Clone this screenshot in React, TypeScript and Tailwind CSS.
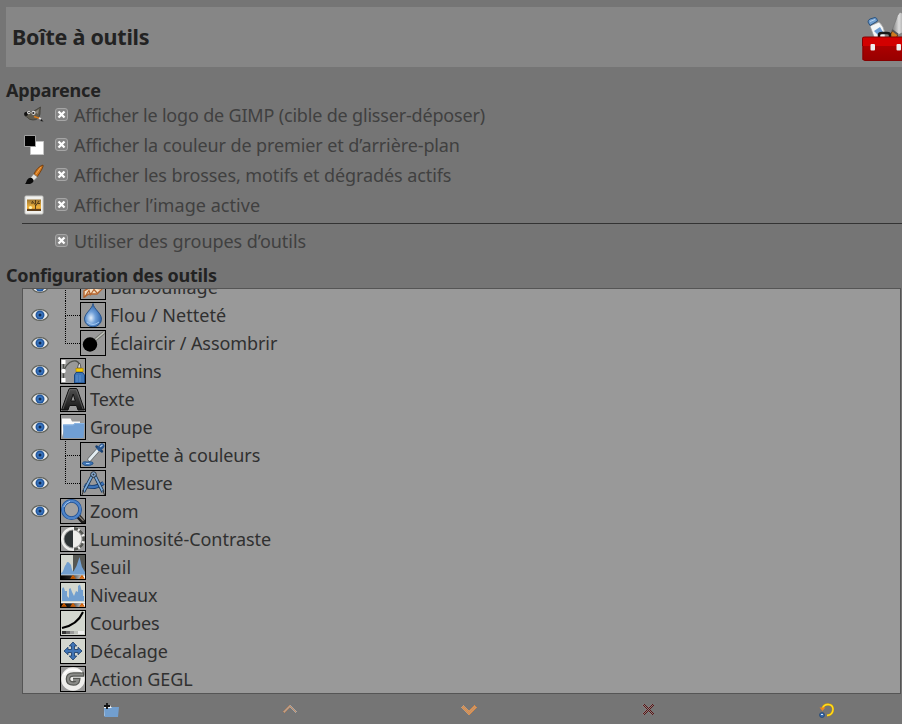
import React from "react";

type IconProps = { children: React.ReactNode };

function ToolBox({ children }: IconProps) {
  return (
    <svg className="h-[26px] w-[26px] shrink-0" viewBox="0 0 26 26">
      {children}
      <rect x=".5" y=".5" width="25" height="25" fill="none" stroke="#000" />
    </svg>
  );
}

const Eye = () => (
  <svg className="h-3 w-[18px] shrink-0" viewBox="0 0 18 12">
    <path d="M.6 6C3.500-1.200 14.500-1.200 17.400 6 14.500 13.200 3.500 13.200.6 6Z" fill="#eeeeec" stroke="#62645e" strokeWidth="1.300" />
    <circle cx="9" cy="6" r="4.500" fill="#2258a0" />
    <circle cx="9" cy="6" r="2.900" fill="#3d78c0" />
    <circle cx="9" cy="6" r="1.500" fill="#122b50" />
  </svg>
);

const Smudge = () => (
  <ToolBox>
    <path d="M4 23 4 17 9 14 15 8 22 8 22 15 17 20 9 20Z" fill="#f6dfc3" stroke="#b5642d" strokeWidth="1.400" />
    <path d="M4.500 23.500 9 16.500 10.500 21M10 21.500 14 15.500 17 19M15 14 20 15" fill="none" stroke="#b5642d" strokeWidth="1.200" />
  </ToolBox>
);

const Drop = () => (
  <ToolBox>
    <defs>
      <radialGradient id="drop" cx=".38" cy=".62" r=".6">
        <stop offset="0" stopColor="#e4effb" />
        <stop offset=".45" stopColor="#6f9fd8" />
        <stop offset="1" stopColor="#2f65ab" />
      </radialGradient>
    </defs>
    <path d="M13 1.500C13.600 7 21.500 11 21.500 17.200A8.500 7.600 0 0 1 4.500 17.200C4.500 11 12.400 7 13 1.500Z" fill="url(#drop)" stroke="#214d85" strokeWidth=".9" />
    <path d="M7 20Q13 25 19 20" fill="none" stroke="#a4c9f2" strokeWidth="1" />
  </ToolBox>
);

const Dodge = () => (
  <ToolBox>
    <path d="M15 10 24 2.500" stroke="#70726d" strokeWidth="3.200" />
    <path d="M15 10 24 2.500" stroke="#c2c4bd" strokeWidth="1.600" />
    <circle cx="10" cy="14.500" r="7.200" fill="#000" />
  </ToolBox>
);

const Paths = () => (
  <ToolBox>
    <path d="M3.500 3V23M4 12C7 5 12 2 16 3Q20 4 19.500 10" fill="none" stroke="#4f514d" strokeWidth="1.300" />
    <path d="M17.500 10 18.700 5.500H20L21 10Z" fill="#ddd" stroke="#333" strokeWidth=".7" />
    <rect x="16" y="10.300" width="7" height="3.500" fill="#f4cd00" stroke="#b58b00" strokeWidth=".7" />
    <path d="M16 14.500H22.500L24.500 17V25H14.500V17Z" fill="#3f76b8" stroke="#1c4780" />
    <path d="M17 17V24M20 17V24" stroke="#5e91cc" />
    <rect x="1.500" y="2" width="4" height="4" fill="#fff" />
    <circle cx="3.500" cy="13" r="2.200" fill="#fff" />
    <rect x="1.500" y="20" width="4" height="4" fill="#fff" />
  </ToolBox>
);

const TextTool = () => (
  <ToolBox>
    <defs>
      <linearGradient id="ink" x2="0" y2="1">
        <stop stopColor="#505050" />
        <stop offset="1" stopColor="#171717" />
      </linearGradient>
    </defs>
    <path d="M1.500 24 8.800 3.500Q9.200 2.500 10 2.500H16Q17 2.500 17.300 3.500L24.500 24H18L16.500 19.500H9.500L8 24ZM10.800 15H15.300L13.200 8Z" fill="url(#ink)" fillRule="evenodd" stroke="#111" strokeWidth="1" />
    <path d="M3 23 9.800 3.700H16.300L23 23" fill="none" stroke="#777" strokeWidth=".6" />
  </ToolBox>
);

const Folder = () => (
  <ToolBox>
    <path d="M2 23V4.500H10.500L12 7.500H20V12H5Z" fill="#fafafa" />
    <path d="M3 10.500H13L15 9H24.500L23.500 24H3.500Z" fill="#709fd4" />
    <path d="M3.500 11H13.200L15.200 9.500H24" fill="none" stroke="#8bb5e3" />
  </ToolBox>
);

const Picker = () => (
  <ToolBox>
    <path d="M9.500 17.500 17.500 8.500" stroke="#666a6c" strokeWidth="4.200" strokeLinecap="round" />
    <path d="M9.500 17.500 17.500 8.500" stroke="#e4edf2" strokeWidth="2.700" strokeLinecap="round" />
    <path d="M16.500 4.500 22 9.500" stroke="#173f70" strokeWidth="2.400" strokeLinecap="round" />
    <path d="M19.500 6.500 22 4" stroke="#27558f" strokeWidth="5" strokeLinecap="round" />
    <path d="M20.500 4.500 22 3.300" stroke="#a3c3e8" strokeWidth="1.500" strokeLinecap="round" />
    <path d="M2.500 22Q2 19 7 20Q14 19 13 22Q10 24.500 5 23.500Z" fill="#3f75b6" stroke="#1d4c83" strokeWidth=".8" />
    <path d="M6 21.500H9.500" stroke="#abd0fa" />
  </ToolBox>
);

const Measure = () => (
  <ToolBox>
    <path d="M4.500 15Q13 20 23.500 13" fill="none" stroke="#173d70" strokeWidth="4" />
    <path d="M4.500 15Q13 20 23.500 13" fill="none" stroke="#3d74b8" strokeWidth="2.400" />
    <path d="M12.500 5 3.500 22M14.500 5 23 22" stroke="#173552" strokeWidth="3.400" />
    <path d="M12.500 5 3.700 21.500M14.500 5 22.800 21.500" stroke="#7ca9d9" strokeWidth="1.700" />
    <path d="M3.700 20 2 25M22.800 20 24.500 25" stroke="#333" />
    <circle cx="13.500" cy="4.500" r="2.800" fill="#89afd9" stroke="#29323a" />
    <circle cx="13.500" cy="4.500" r="1" fill="#29323a" />
  </ToolBox>
);

const Zoom = () => (
  <ToolBox>
    <path d="m18.500 18.500 4.500 5" stroke="#1c1b1a" strokeWidth="4.800" strokeLinecap="round" />
    <path d="m18.500 17.800 5 5" stroke="#827b72" strokeWidth="1.400" />
    <circle cx="11.500" cy="11.500" r="8.600" fill="#a2a2a2" stroke="#1f4f91" strokeWidth="3.800" />
    <circle cx="11.500" cy="11.500" r="8.700" fill="none" stroke="#4d83c8" strokeWidth="2.200" />
    <path d="M3.800 9Q5.500 4.500 10 3.200" fill="none" stroke="#a5c6ec" />
  </ToolBox>
);

const Brightness = () => (
  <ToolBox>
    <circle cx="13" cy="13" r="10.700" fill="none" stroke="#eeeeec" strokeWidth="2.500" />
    <path d="M13 2.300A10.700 10.700 0 0 1 13 23.700" fill="none" stroke="#555753" strokeWidth="2.800" strokeDasharray="5 2" />
    <path d="M13 4.500A8.500 8.500 0 0 0 13 21.500Z" fill="#2e3436" />
    <path d="M13 4.500A8.500 8.500 0 0 1 13 21.500Z" fill="#eeeeec" />
    <path d="M13.500 1V4.500M13.500 21.500V25" stroke="#eee" />
  </ToolBox>
);

const Marker = ({ x, fill }: { x: number; fill: string }) => (
  <path d={`M${x - 1.7} 24.200 ${x} 21.800 ${x + 1.7} 24.200Z`} fill={fill} stroke="#ce5c00" strokeWidth="1.200" />
);

const Levelbar = () => (
  <>
    <defs>
      <linearGradient id="levelbar">
        <stop stopColor="#000" />
        <stop offset=".4" stopColor="#222" />
        <stop offset="1" stopColor="#fff" />
      </linearGradient>
    </defs>
    <rect x="1" y="21.500" width="24" height="3.500" fill="url(#levelbar)" />
  </>
);

const Threshold = () => (
  <ToolBox>
    <path fill="#d3d7cf" d="M1 1H13V21H1Z" />
    <path fill="#555753" d="M13 1H25V21H13Z" />
    <path d="M1 19C4 18 4 12 6 10.500Q7 7 9 8.500L11 11Q12 17 13.500 17.500L16.500 12 19.500 3 22 13 25 18V20H1Z" fill="#729fcf" />
    <path d="M1 20.500H25" stroke="#9fb9d3" />
    <Levelbar />
    <Marker x={13} fill="#1c0900" />
    <Marker x={22} fill="#fff" />
  </ToolBox>
);

const Levels = () => (
  <ToolBox>
    <path fill="#d3d7cf" d="M1 1H25V21H1Z" />
    <path d="M2 19V7Q3 4 4 6L5 9H7V14L9 16V7L10.500 6 12 10 14 14 16 9 18 10V4L20 2.500 21.500 8H23V14H24V19Z" fill="#729fcf" />
    <path d="M1 20.500H25" stroke="#eee" />
    <Levelbar />
    <Marker x={4} fill="#000" />
    <Marker x={13} fill="#777" />
    <Marker x={22} fill="#fff" />
  </ToolBox>
);

const Curves = () => (
  <ToolBox>
    <path fill="#d3d7cf" d="M1 1H25V25H1Z" />
    <path d="M2 18C12 16 19 11 23 2" fill="none" stroke="#000" strokeWidth="2" />
    <path d="M2 22.500H6" stroke="#333" strokeWidth="3" />
    <path d="M6 22.500H10" stroke="#666" strokeWidth="3" />
    <path d="M10 22.500H14" stroke="#999" strokeWidth="3" />
    <path d="M14 22.500H18" stroke="#bfc2bc" strokeWidth="3" />
    <path d="M18 22.500H24" stroke="#eee" strokeWidth="3" />
  </ToolBox>
);

const Offset = () => (
  <ToolBox>
    <path fill="#d3d7cf" d="M1 1H25V25H1Z" />
    <path d="m13 4 3.700 4h-2.200v3.500H18V9.300l4 3.700-4 3.700v-2.200h-3.500V18h2.200L13 22l-3.700-4h2.200v-3.500H8v2.200L4 13l4-3.700v2.200h3.500V8H9.300Z" fill="#3f75b6" stroke="#22446e" strokeWidth=".9" />
  </ToolBox>
);

const Gegl = () => (
  <ToolBox>
    <circle cx="13" cy="13" r="11.800" fill="#eeeeec" />
    <path d="M24 8.500H13.500Q8 8.500 8 13T13.500 17.500Q17.500 17.500 18 14H13" fill="none" stroke="#555753" strokeWidth="4.600" />
    <path d="M23 8.500H13.500Q8 8.500 8 13T13.500 17.500Q17.500 17.500 18 14H13" fill="none" stroke="#8a8b88" strokeWidth="2.200" />
    <path d="M4 9Q7 3 13 3.500T22 6" fill="none" stroke="#fff" strokeWidth="1.500" />
  </ToolBox>
);

const Wilber = () => (
  <svg className="h-5 w-5" viewBox="0 0 20 20">
    <path d="M4 6Q7 8 10 6L16.500 2Q16 5 16 9 15 15 9 15Q5 15 3 12L1 11 1 8Z" fill="#5f5b4f" stroke="#393832" strokeWidth=".7" />
    <path d="M11 7 15 4 14 9Z" fill="#8a867c" />
    <circle cx="2" cy="9" r="1.900" fill="#111" />
    <circle cx="4.800" cy="7.500" r="1.700" fill="#ddd" />
    <circle cx="9.500" cy="7.800" r="2.100" fill="#ddd" />
    <circle cx="5" cy="7.500" r=".8" fill="#222" />
    <circle cx="9.300" cy="8" r="1.100" fill="#222" />
    <path d="m10 11.500 6 2" stroke="#d97a18" strokeWidth="1.500" />
    <path d="m15 13 2 1" stroke="#ddd" strokeWidth="1.600" />
    <path d="m17 14 2.500 2.500-3-.5Z" fill="#161616" />
  </svg>
);

const Swatches = () => (
  <svg className="h-5 w-5" viewBox="0 0 20 20">
    <path d="M6.500 6.500h13v13h-13Z" fill="#fff" stroke="#c4c4c4" />
    <path d="M.5.500h11v11H.5Z" fill="#000" stroke="#a0a0a0" />
  </svg>
);

const Brush = () => (
  <svg className="h-[22px] w-5" viewBox="0 0 20 22">
    <path d="M9.500 11Q13 3 19 1 20 3 13 13Z" fill="#cf761d" stroke="#713b0c" strokeWidth=".9" />
    <path d="m12 10 5-7" stroke="#f2a44f" />
    <path d="m6.500 14 3-4 4 3-4 4Z" fill="#e2e2df" stroke="#777" strokeWidth=".6" />
    <path d="M1 20Q2 19 3 16 6 12 9 15 11 18 6 20Z" fill="#0b0b0b" />
  </svg>
);

const Picture = () => (
  <svg className="h-5 w-5" viewBox="0 0 20 20">
    <defs>
      <linearGradient id="dusk" x2="0" y2="1">
        <stop stopColor="#9a7433" />
        <stop offset=".7" stopColor="#f2b43a" />
        <stop offset="1" stopColor="#b77422" />
      </linearGradient>
    </defs>
    <rect x="1" y="1" width="18" height="18" rx="1" fill="#f1f1ee" stroke="#c8c8c5" />
    <path d="M3 4.500h14v11H3Z" fill="url(#dusk)" />
    <path d="M3 14h14v2H3Z" fill="#5e3f1b" />
    <circle cx="6.500" cy="12.500" r="1.600" fill="#fff4b4" />
    <path d="M11.500 14V10L8 6M11.500 11 15 6M11.500 9V5M9 8H7M13.500 8.500H16" fill="none" stroke="#4a3415" strokeWidth=".9" />
  </svg>
);

const Toolbox = () => (
  <svg className="-mt-px h-[49px] w-[41px] shrink-0" viewBox="0 0 41 49">
    <defs>
      <linearGradient id="bristles" x1="0" x2="1">
        <stop stopColor="#777" />
        <stop offset=".5" stopColor="#ddd" />
        <stop offset="1" stopColor="#888" />
      </linearGradient>
      <linearGradient id="case" x2="0" y2="1">
        <stop stopColor="#b80000" />
        <stop offset="1" stopColor="#980000" />
      </linearGradient>
    </defs>
    <path d="m9 14 9-4q5 4 6 12v8H15Z" fill="#f4f6f7" stroke="#999" strokeWidth=".7" />
    <path d="m13 19 6-4 3 5-5 3Z" fill="#6b9bd0" />
    <path d="m7 10q0-2 2-3l5-1.500q2 0 2.500 3.500l-7.500 4.500Z" fill="#729fcf" stroke="#28527f" />
    <path d="m9 9.500 5-2" stroke="#b6d2ee" />
    <path d="m32 18 5 4q-1 5-5 8h-4q0-7 4-12Z" fill="#ce7b20" stroke="#653709" />
    <path d="m31 18 4-10q1-5 4-8l6 3v16l-8 4Z" fill="url(#bristles)" stroke="#777" strokeWidth=".7" />
    <path d="m31 18 6 4.500" stroke="#555" strokeWidth="1.800" />
    <path d="M18 27v-4q0-2 3-2h5q3 0 3 2v4" fill="none" stroke="#171717" strokeWidth="2.500" />
    <path d="M1.500 48V26q0-1 2-1H43v23Z" fill="url(#case)" />
    <path d="M1 34v-7q0-2 2-2H43v9Z" fill="#d20000" />
    <path d="M1.500 34V26.500q0-1.500 2-1.500H42M2 34v13q0 1.500 2 1.500H42" fill="none" stroke="#850000" />
    <rect x="9.500" y="32" width="4.500" height="6.500" rx="1" fill="#eee" />
    <rect x="35.500" y="32" width="4.500" height="6.500" rx="1" fill="#eee" />
  </svg>
);

const Check = () => (
  <svg className="-mt-0.5 ml-[11px] h-[13px] w-[13px] shrink-0" viewBox="0 0 13 13">
    <rect x=".5" y=".5" width="12" height="12" rx="2.500" fill="#858585" stroke="#a5a5a5" />
    <path d="m3.500 3.500 6 6m0-6-6 6" stroke="#fff" strokeWidth="2.300" />
  </svg>
);

const options = [
  { label: "Afficher le logo de GIMP (cible de glisser-déposer)", icon: <Wilber />, track: "tracking-[-0.18px]" },
  { label: "Afficher la couleur de premier et d’arrière-plan", icon: <Swatches />, track: "tracking-[-0.11px]" },
  { label: "Afficher les brosses, motifs et dégradés actifs", icon: <Brush />, track: "tracking-[-0.09px]" },
  { label: "Afficher l’image active", icon: <Picture />, track: "tracking-[0.05px]" },
];

type Tool = { label: string; icon: React.ReactNode; eye?: boolean; child?: boolean; last?: boolean; track: string };

const tools: Tool[] = [
  { label: "Barbouillage", icon: <Smudge />, eye: true, child: true, track: "tracking-[0.02px]" },
  { label: "Flou / Netteté", icon: <Drop />, eye: true, child: true, track: "tracking-[0.03px]" },
  { label: "Éclaircir / Assombrir", icon: <Dodge />, eye: true, child: true, last: true, track: "tracking-[-0.08px]" },
  { label: "Chemins", icon: <Paths />, eye: true, track: "tracking-[-0.38px]" },
  { label: "Texte", icon: <TextTool />, eye: true, track: "tracking-[0px]" },
  { label: "Groupe", icon: <Folder />, eye: true, track: "tracking-[-0.16px]" },
  { label: "Pipette à couleurs", icon: <Picker />, eye: true, child: true, track: "tracking-[-0.1px]" },
  { label: "Mesure", icon: <Measure />, eye: true, child: true, last: true, track: "tracking-[-0.16px]" },
  { label: "Zoom", icon: <Zoom />, eye: true, track: "tracking-[-0.1px]" },
  { label: "Luminosité-Contraste", icon: <Brightness />, track: "tracking-[-0.05px]" },
  { label: "Seuil", icon: <Threshold />, track: "tracking-[0.2px]" },
  { label: "Niveaux", icon: <Levels />, track: "tracking-[-0.15px]" },
  { label: "Courbes", icon: <Curves />, track: "tracking-[-0.18px]" },
  { label: "Décalage", icon: <Offset />, track: "tracking-[0px]" },
  { label: "Action GEGL", icon: <Gegl />, track: "tracking-[-0.1px]" },
];

function ToolRow({ tool }: { tool: Tool }) {
  return (
    <div className="flex h-7 shrink-0 items-center pl-2">
      <div className="flex w-[29px] shrink-0">{tool.eye && <Eye />}</div>
      {tool.child && (
        <div className="ml-[5px] flex w-[15px] shrink-0 flex-col self-stretch">
          <div className="h-[15px] border-b border-l border-dotted border-black" />
          {!tool.last && <div className="flex-1 border-l border-dotted border-black" />}
        </div>
      )}
      {tool.icon}
      <span className={`ml-1 whitespace-nowrap text-[18px] leading-7 text-[#303030] ${tool.track}`}>{tool.label}</span>
    </div>
  );
}

const actions = [
  <svg className="h-4 w-[18px]" viewBox="0 0 18 16">
    <path d="M2 14V3h6l1 2h6v5Z" fill="#f4f4f4" />
    <path d="M2 6h7l1-1h7l-1 10H2.500Z" fill="#729fcf" />
    <path d="M5 1v6M2 4h6" stroke="#111" strokeWidth="1.800" />
  </svg>,
  <svg className="h-4 w-4" viewBox="0 0 16 16">
    <path d="m1.500 10.500 6.500-6.500 6.500 6.500" fill="none" stroke="url(#tan)" strokeWidth="2.600" shapeRendering="crispEdges" />
  </svg>,
  <svg className="h-4 w-4" viewBox="0 0 16 16">
    <path d="m1.500 4.500 6.500 6.500 6.500-6.500" fill="none" stroke="url(#amber)" strokeWidth="3" shapeRendering="crispEdges" />
  </svg>,
  <svg className="h-4 w-4" viewBox="0 0 16 16">
    <path d="m3 2.500 10 10m0-10L3 12.500" fill="none" stroke="url(#maroon)" strokeWidth="3" shapeRendering="crispEdges" />
  </svg>,
  <svg className="h-4 w-4" viewBox="0 0 16 16">
    <path d="M3.500 6.500C5 1 13.500 1 14 7q0 6-6 6.500" fill="none" stroke="#d29b00" strokeWidth="2.200" />
    <path d="M3.500 6.500C5 1 13.500 1 14 7q0 6-6 6.500" fill="none" stroke="#ffdd20" strokeWidth="1.400" />
    <path d="M.5 5.500H6.500L3.500 9Z" fill="#ef851b" />
    <circle cx="3" cy="13" r="2.500" fill="#3869aa" stroke="#183a6a" strokeWidth=".6" />
    <path d="M2 12.500h2" stroke="#dce9f8" />
  </svg>,
];

export default function App() {
  return (
    <div className="flex h-[724px] w-[902px] flex-col overflow-hidden bg-[#757575] pt-[7px] font-['Noto_Sans',sans-serif] text-[18px] text-[#404040]">
      <svg className="absolute h-0 w-0">
        <defs>
          <pattern id="tan" width="2" height="2" patternUnits="userSpaceOnUse">
            <path d="M0 0h1v1H0ZM1 1h1v1H1Z" fill="#c98a5c" />
            <path d="M1 0h1v1H1ZM0 1h1v1H0Z" fill="#a5a5a5" />
          </pattern>
          <pattern id="amber" width="2" height="2" patternUnits="userSpaceOnUse">
            <path d="M0 0h1v1H0ZM1 1h1v1H1Z" fill="#e88a3a" />
            <path d="M1 0h1v1H1ZM0 1h1v1H0Z" fill="#b89a80" />
          </pattern>
          <pattern id="maroon" width="2" height="2" patternUnits="userSpaceOnUse">
            <path d="M0 0h1v1H0ZM1 1h1v1H1Z" fill="#5a1414" />
            <path d="M1 0h1v1H1ZM0 1h1v1H0Z" fill="#858080" />
          </pattern>
        </defs>
      </svg>
      <header className="ml-1.5 flex h-[60px] shrink-0 items-center justify-between bg-[#868686] pl-1.5">
        <h1 className="whitespace-nowrap text-[21.5px] font-bold tracking-[-0.25px] text-[#222]">Boîte à outils</h1>
        <Toolbox />
      </header>
      <h2 className="mt-[13px] h-5 pl-1.5 text-[18px] leading-[21px] font-bold tracking-[-0.15px] text-[#222]">Apparence</h2>
      <div className="flex flex-col">
        {options.map((o) => (
          <label key={o.label} className="flex h-[30px] shrink-0 items-center pl-6">
            <span className="flex w-5 shrink-0">{o.icon}</span>
            <Check />
            <span className={`ml-1.5 whitespace-nowrap ${o.track}`}>{o.label}</span>
          </label>
        ))}
      </div>
      <div className="mt-[3px] ml-[22px] h-px shrink-0 bg-[#333]" />
      <label className="mt-0.5 flex h-[30px] shrink-0 items-center pl-11">
        <Check />
        <span className="ml-1.5 tracking-[-0.04px] whitespace-nowrap">Utiliser des groupes d’outils</span>
      </label>
      <h2 className="mt-[7px] h-[25px] shrink-0 pl-1.5 text-[18px] leading-6 font-bold tracking-[-0.2px] text-[#222]">Configuration des outils</h2>
      <div className="mr-px ml-[22px] flex h-[406px] shrink-0 flex-col justify-end overflow-hidden border border-[#555] bg-[#999]">
        {tools.map((t) => (
          <ToolRow key={t.label} tool={t} />
        ))}
      </div>
      <footer className="flex flex-1 items-center overflow-hidden pt-0.5 pl-[21px]">
        {actions.map((a, i) => (
          <button key={i} className="flex w-[179px] shrink-0 items-center justify-center">{a}</button>
        ))}
      </footer>
    </div>
  );
}
